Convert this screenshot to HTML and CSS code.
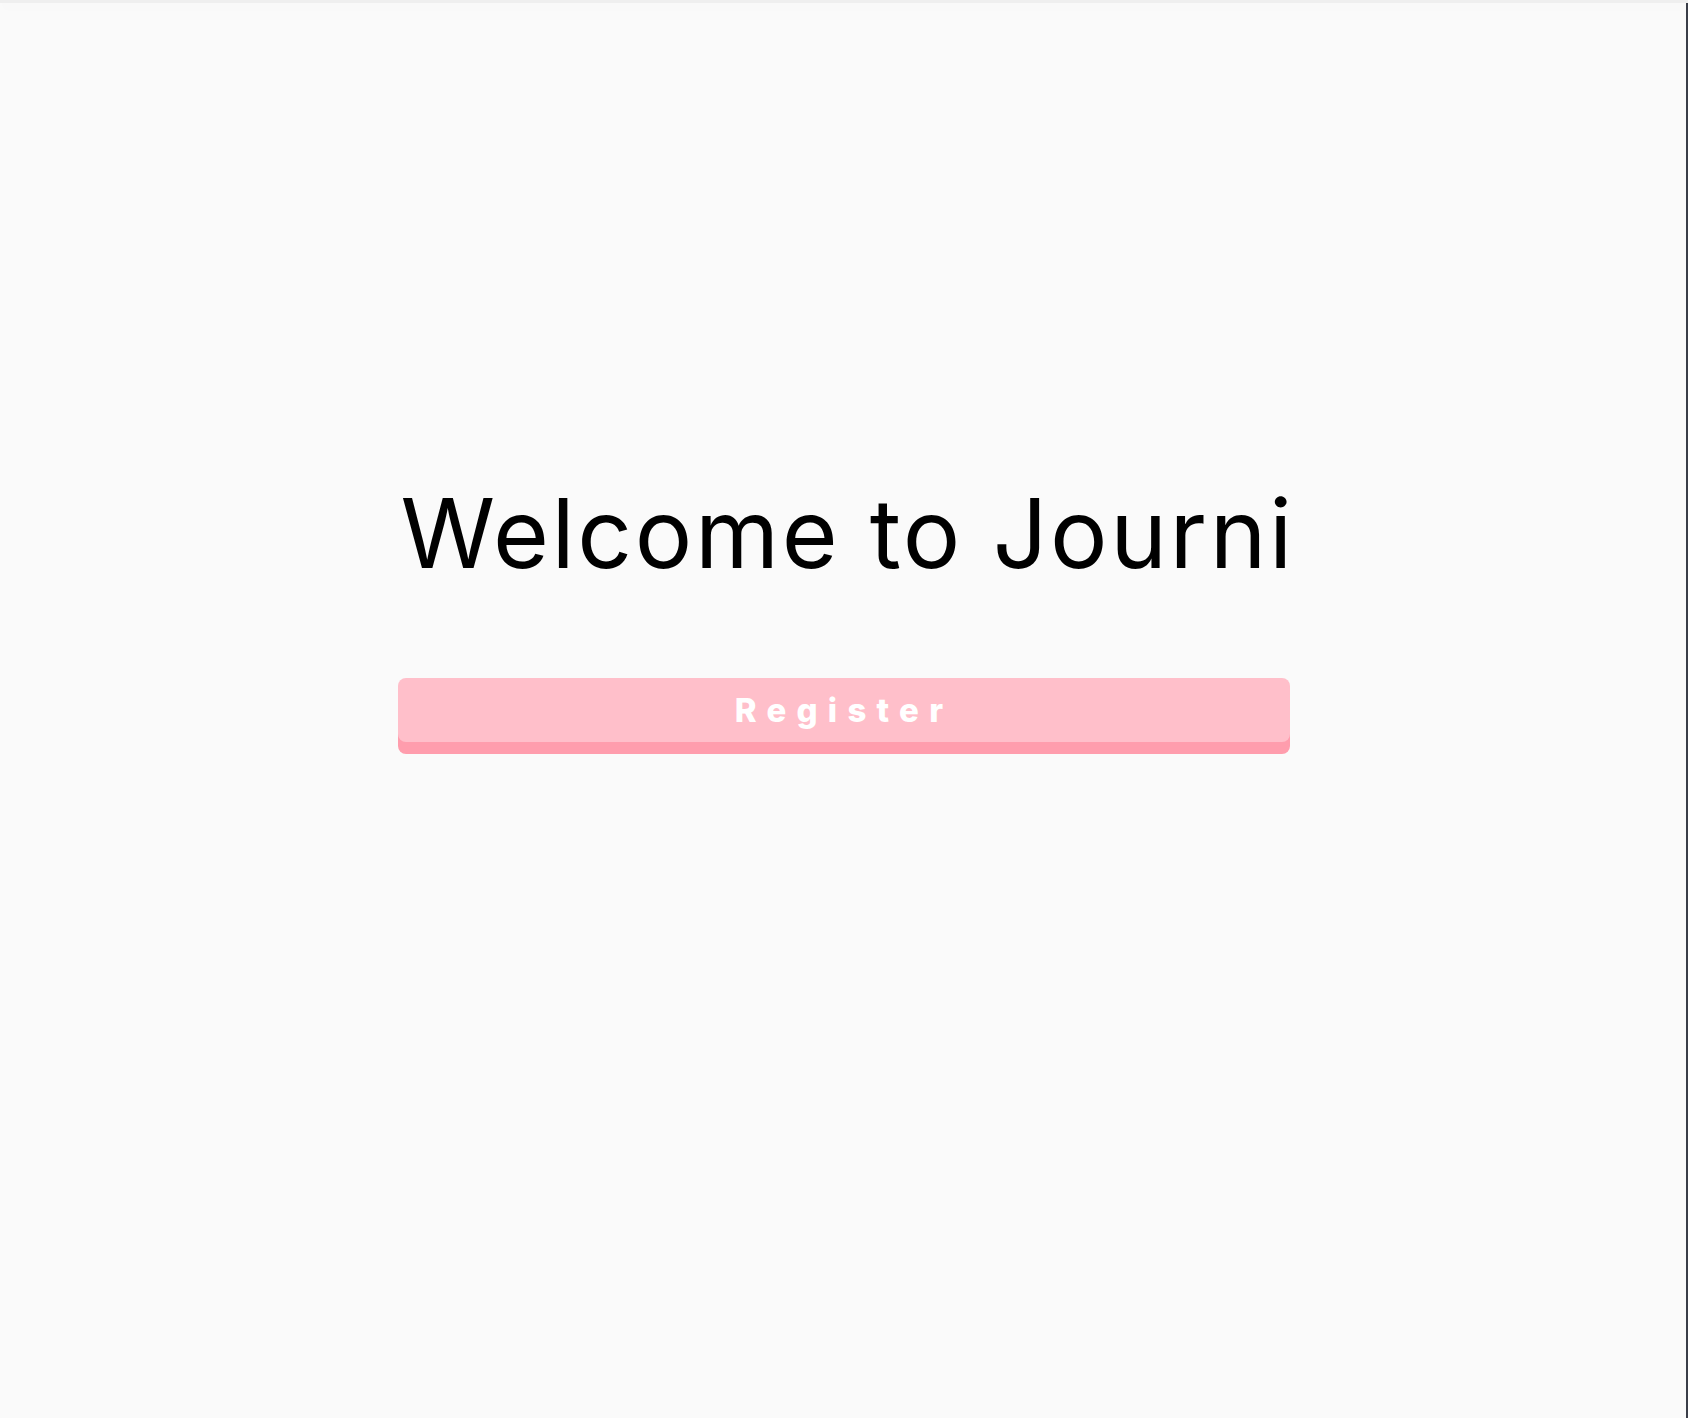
FILE: index.html
```html
<!DOCTYPE html>
<html lang="en">
<head>
<meta charset="utf-8">
<title>Journi</title>
<link rel="stylesheet" href="styles.css">
</head>
<body>
<div class="topbar"></div>
<main class="main">
  <div class="welcome">
    <h1 class="title">Welcome to Journi</h1>
    <button class="register" type="button">Register</button>
  </div>
</main>
</body>
</html>
```

FILE: styles.css
```css
html, body {
  margin: 0;
  padding: 0;
}

body {
  min-height: 100vh;
  background: #fafafa;
  box-shadow: inset -2px 0 0 #3a3e48;
  font-family: Inter, "Open Sans", sans-serif;
  color: #000;
}

.topbar {
  height: 3px;
  background: #efefef;
  box-shadow: 0 3px 14px rgba(0, 0, 0, 0.035);
}

.main {
  display: flex;
  justify-content: center;
  padding-top: 470px;
}

.welcome {
  width: 892px;
  display: flex;
  flex-direction: column;
  align-items: stretch;
}

.title {
  margin: 0;
  font-family: Inter, sans-serif;
  font-weight: 400;
  font-size: 96px;
  line-height: 120px;
  text-align: center;
  letter-spacing: 2.6px;
  text-indent: 2.6px;
  white-space: nowrap;
}

.register {
  margin-top: 85px;
  height: 64px;
  border: 0;
  border-radius: 8px;
  background: #ffbfca;
  box-shadow: 0 12px 0 #ff9dad;
  color: #fff;
  font-family: Inter, sans-serif;
  font-weight: 800;
  font-size: 33px;
  letter-spacing: 0.31em;
  cursor: pointer;
  padding: 0;
}
```
